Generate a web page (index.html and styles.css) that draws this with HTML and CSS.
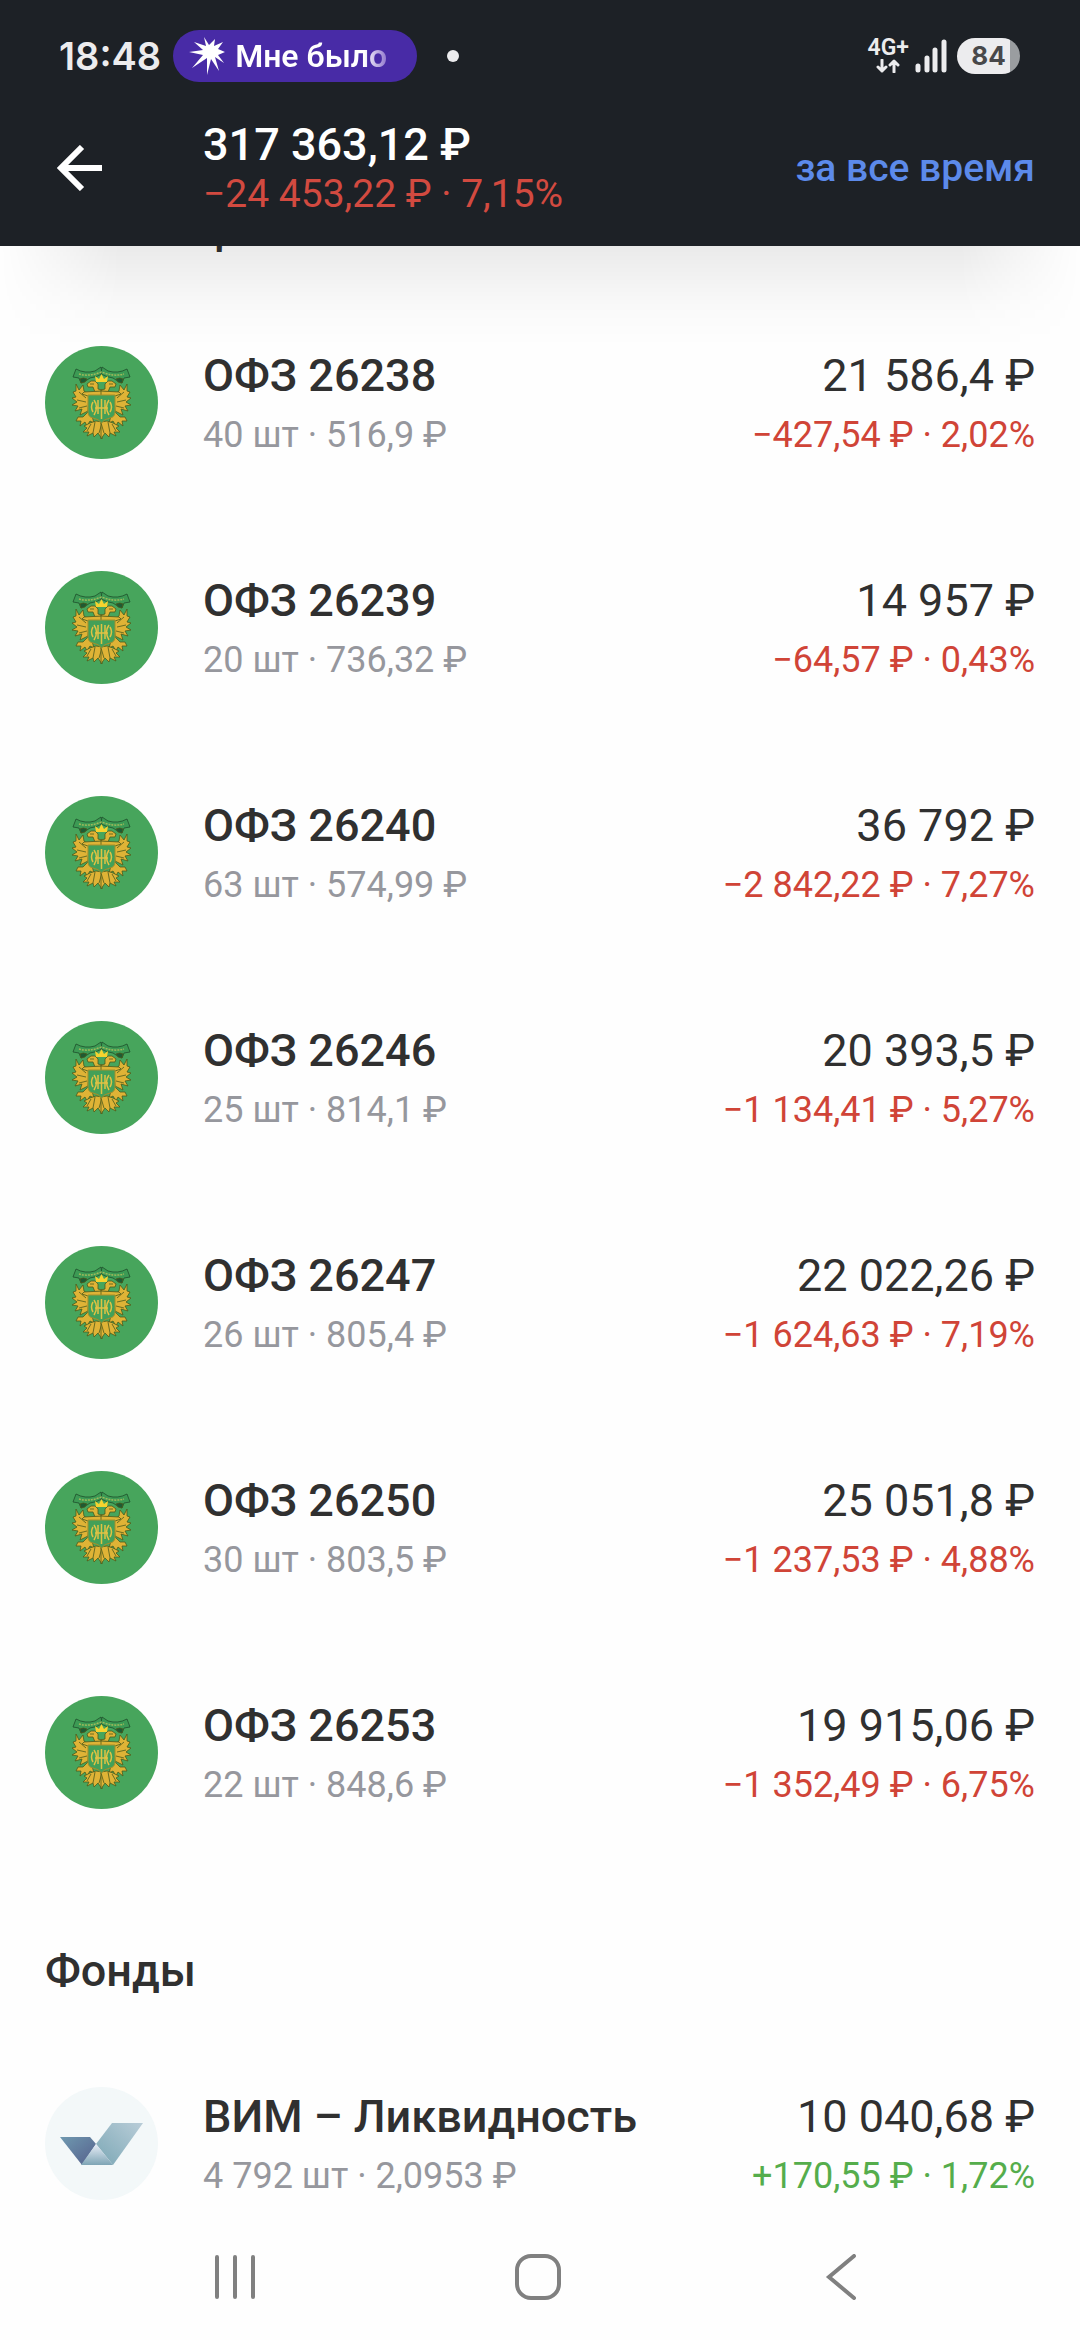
FILE: index.html
```html
<!DOCTYPE html>
<html lang="ru">
  <head>
    <meta charset="UTF-8" />
    <meta name="viewport" content="width=device-width, initial-scale=1.0" />
    <title>Портфель</title>
    <link rel="stylesheet" href="styles.css" />
  </head>

  <body>
    <!-- shared icons -->
    <svg class="sprite" aria-hidden="true">
      <symbol id="ofz" viewBox="0 0 113 113">
        <g id="ofz-half" stroke="#4d5a1c" stroke-width="0.8" fill="#dfb336">
          <path d="M56 21 L50 25 Q40 28 31 23 L28 31 L34 32 L36 37 L42 34 L45 32 Q52 31 57 28 Z" fill="#3c9a54" stroke="#1f4f2c" />
          <path d="M35 33 Q38 31 42 33 L40 36 L36 37 Z" fill="#1f5a34" />
          <path d="M44 49 L39 45 L38 39 L34 44 L31 38 L31 45 L28 46 L31 51 L27 52 L32 56 L27 59 L33 60 L30 65 L37 63 L35 69 L43 65 Z" />
          <path d="M57 45 L50 46 L48 41 L43 41 L42 38 L46 35 L50 35 L53 38 L53 43 L57 44 Z" />
          <path d="M39 46 L57 45 V50 H43 L37 48 Z" />
          <path d="M43 66 L38 71 L33 71 L31 75 L36 75 L35 80 L40 76 L42 80 L45 75 L49 77 L47 70 Z" />
          <path d="M57 76 L51 75 L45 77 L39 80 L42 82 L38 86 L44 86 L42 90 L48 87 L49 91 L53 87 L57 93 Z" />
          <path d="M57 77 L54 87 M50 76 L48 87 M46 78 L42 85 M34 46 L41 52 M32 54 L41 56 M34 62 L42 60 M45 38 L49 38" fill="none" />
        </g>
        <use href="#ofz-half" transform="translate(113 0) scale(-1 1)" />
        <path d="M51 36 L50 30 L54 33 L56.5 28 L59 33 L63 30 L62 36 Z" fill="#f5d32f" />
        <path d="M34 28 Q44 31 56.5 26 Q69 31 79 28" fill="none" stroke="#9fb95a" stroke-width="1.5" stroke-dasharray="2 1" />
        <path d="M43 49 H70 V66 Q70 71 65 72 Q59 73 56.5 77 Q54 73 48 72 Q43 71 43 66 Z" fill="#43a058" stroke="#a58f2b" stroke-width="1" />
        <path d="M49 54 Q54 61 49 69 M64 54 Q59 61 64 69 M48 56 Q45 61 48 66 M65 56 Q68 61 65 66 M56.5 53 V73 M53 54 V68 M60 54 V68 M50 62 H63" fill="none" stroke="#e0c244" stroke-width="1.5" />
      </symbol>
    </svg>

    <header class="header">
      <div class="status">
        <span class="status-time">18:48</span>
        <div class="live">
          <svg width="36" height="38" viewBox="0 0 36 38" fill="#fff">
            <path d="M15 0 L20 8 L26 2 L25 9 L34 5 L29 12 L36 15 L29 18 L35 26 L26 20 L30 34 L22 22 L18 38 L18 21 L3 31 L14 18 L0 15 L14 13 L5 5 L17 9 Z" />
          </svg>
          <span class="live-text">Мне было</span>
        </div>
        <span class="status-dot"></span>
        <div class="status-right">
          <div class="network">
            <span>4G+</span>
            <svg width="24" height="14" viewBox="0 0 24 14" fill="none" stroke="#ececee" stroke-width="3" stroke-linecap="round" stroke-linejoin="round">
              <path d="M6 1 V12 M2 8 L6 12 L10 8 M18 13 V2 M14 6 L18 2 L22 6" />
            </svg>
          </div>
          <svg width="32" height="34" viewBox="0 0 32 34" stroke="#ececee" stroke-width="5" stroke-linecap="round">
            <path d="M3 27 V31 M12 19 V31 M20 11 V31 M29 3 V31" />
          </svg>
          <span class="battery">84</span>
        </div>
      </div>

      <div class="toolbar">
        <button class="back" aria-label="Назад">
          <svg width="46" height="46" viewBox="0 0 46 46" fill="none" stroke="#fff" stroke-width="6">
            <path d="M46 23 H5 M26 2 L5 23 L26 44" />
          </svg>
        </button>
        <div class="total">
          <h1>317 363,12 ₽</h1>
          <p>−24 453,22 ₽ · 7,15%</p>
        </div>
        <button class="period">за все время</button>
      </div>
    </header>

    <main class="portfolio">
      <h2>Облигации</h2>
      <ul class="list">
        <li class="item">
          <svg class="logo"><use href="#ofz" /></svg>
          <div class="info">
            <p class="name">ОФЗ 26238</p>
            <p class="count">40 шт · 516,9 ₽</p>
          </div>
          <div class="sum">
            <p class="value">21 586,4 ₽</p>
            <p class="change down">−427,54 ₽ · 2,02%</p>
          </div>
        </li>
        <li class="item">
          <svg class="logo"><use href="#ofz" /></svg>
          <div class="info">
            <p class="name">ОФЗ 26239</p>
            <p class="count">20 шт · 736,32 ₽</p>
          </div>
          <div class="sum">
            <p class="value">14 957 ₽</p>
            <p class="change down">−64,57 ₽ · 0,43%</p>
          </div>
        </li>
        <li class="item">
          <svg class="logo"><use href="#ofz" /></svg>
          <div class="info">
            <p class="name">ОФЗ 26240</p>
            <p class="count">63 шт · 574,99 ₽</p>
          </div>
          <div class="sum">
            <p class="value">36 792 ₽</p>
            <p class="change down">−2 842,22 ₽ · 7,27%</p>
          </div>
        </li>
        <li class="item">
          <svg class="logo"><use href="#ofz" /></svg>
          <div class="info">
            <p class="name">ОФЗ 26246</p>
            <p class="count">25 шт · 814,1 ₽</p>
          </div>
          <div class="sum">
            <p class="value">20 393,5 ₽</p>
            <p class="change down">−1 134,41 ₽ · 5,27%</p>
          </div>
        </li>
        <li class="item">
          <svg class="logo"><use href="#ofz" /></svg>
          <div class="info">
            <p class="name">ОФЗ 26247</p>
            <p class="count">26 шт · 805,4 ₽</p>
          </div>
          <div class="sum">
            <p class="value">22 022,26 ₽</p>
            <p class="change down">−1 624,63 ₽ · 7,19%</p>
          </div>
        </li>
        <li class="item">
          <svg class="logo"><use href="#ofz" /></svg>
          <div class="info">
            <p class="name">ОФЗ 26250</p>
            <p class="count">30 шт · 803,5 ₽</p>
          </div>
          <div class="sum">
            <p class="value">25 051,8 ₽</p>
            <p class="change down">−1 237,53 ₽ · 4,88%</p>
          </div>
        </li>
        <li class="item">
          <svg class="logo"><use href="#ofz" /></svg>
          <div class="info">
            <p class="name">ОФЗ 26253</p>
            <p class="count">22 шт · 848,6 ₽</p>
          </div>
          <div class="sum">
            <p class="value">19 915,06 ₽</p>
            <p class="change down">−1 352,49 ₽ · 6,75%</p>
          </div>
        </li>
      </ul>

      <h2>Фонды</h2>
      <ul class="list">
        <li class="item">
          <svg class="logo logo-vim" viewBox="0 0 113 113">
            <defs>
              <linearGradient id="vim-a" x1="0" y1="0" x2="1" y2="1">
                <stop offset="0" stop-color="#6f99b0" />
                <stop offset="1" stop-color="#55608c" />
              </linearGradient>
              <linearGradient id="vim-b" x1="1" y1="0" x2="0" y2="1">
                <stop offset="0" stop-color="#b9cdd8" />
                <stop offset="1" stop-color="#7ba7b5" />
              </linearGradient>
              <linearGradient id="vim-c" x1="0" y1="0" x2="0" y2="1">
                <stop offset="0" stop-color="#e9eef8" />
                <stop offset="1" stop-color="#7ea5b5" />
              </linearGradient>
            </defs>
            <path d="M15 50 H45 L51 57 L37 78 Z" fill="url(#vim-a)" />
            <path d="M67 36 H98 L68 78 L51 57 Z" fill="url(#vim-b)" />
            <path d="M51 57 L68 78 H36 Z" fill="url(#vim-c)" />
          </svg>
          <div class="info">
            <p class="name">ВИМ – Ликвидность</p>
            <p class="count">4 792 шт · 2,0953 ₽</p>
          </div>
          <div class="sum">
            <p class="value">10 040,68 ₽</p>
            <p class="change up">+170,55 ₽ · 1,72%</p>
          </div>
        </li>
      </ul>
    </main>

    <nav class="navbar">
      <button aria-label="Недавние">
        <svg width="46" height="46" viewBox="0 0 46 46"><path d="M5 3 V43 M23 3 V43 M41 3 V43" /></svg>
      </button>
      <button aria-label="Главный экран">
        <svg width="46" height="46" viewBox="0 0 46 46"><rect x="2" y="2" width="42" height="42" rx="14" /></svg>
      </button>
      <button aria-label="Назад">
        <svg width="46" height="46" viewBox="0 0 46 46"><path d="M36 2 L11 23 L36 44" /></svg>
      </button>
    </nav>
  </body>
</html>
```

FILE: styles.css
```css
* {
  margin: 0;
  padding: 0;
  box-sizing: border-box;
}

body {
  font-family: Roboto, "Liberation Sans", sans-serif;
  color: #303030;
  background-color: #fefefe;
}

button {
  border: none;
  background: none;
  font-family: inherit;
  cursor: pointer;
}

svg {
  display: block;
  flex-shrink: 0;
}

.sprite {
  position: absolute;
  width: 0;
  height: 0;
}

/* header */
.header {
  position: fixed;
  top: 0;
  left: 0;
  right: 0;
  z-index: 1;
  color: white;
  background-color: #1d2126;
}

.header::after {
  content: "";
  position: absolute;
  top: 100%;
  left: 0;
  right: 0;
  height: 100px;
  background: linear-gradient(rgba(0, 0, 0, 0.08), rgba(0, 0, 0, 0.02) 60%, transparent);
  -webkit-mask-image: linear-gradient(to right, transparent, black 120px, black calc(100% - 120px), transparent);
  mask-image: linear-gradient(to right, transparent, black 120px, black calc(100% - 120px), transparent);
}

.status {
  display: flex;
  align-items: center;
  height: 112px;
  padding: 0 60px 0 59px;
  color: #ececee;
  font-family: Inter, Roboto, sans-serif;
}

.status-time {
  font-size: 38px;
  font-weight: 600;
}

.live {
  display: flex;
  align-items: center;
  gap: 10px;
  width: 244px;
  height: 52px;
  margin-left: 12px;
  padding-left: 16px;
  border-radius: 26px;
  background-color: #482ba6;
}

.live-text {
  font-family: Roboto, sans-serif;
  font-size: 32px;
  font-weight: 600;
  color: transparent;
  background: linear-gradient(to right, white 85%, #8f76cd);
  -webkit-background-clip: text;
  background-clip: text;
}

.status-dot {
  width: 12px;
  height: 12px;
  margin-left: 30px;
  border-radius: 50%;
  background-color: #ececee;
}

.status-right {
  display: flex;
  align-items: center;
  gap: 10px;
  margin-left: auto;
}

.network {
  display: flex;
  flex-direction: column;
  align-items: center;
  gap: 2px;
  margin-right: -4px;
  font-family: Roboto, sans-serif;
  font-size: 23px;
  line-height: 18px;
  font-weight: 600;
}

.battery {
  width: 63px;
  height: 36px;
  border-radius: 18px;
  background: linear-gradient(to right, #ececee 84%, #9a9da0 84%);
  color: #48484a;
  font-size: 26px;
  line-height: 36px;
  font-weight: 700;
  text-align: center;
}

.toolbar {
  display: flex;
  align-items: center;
  height: 134px;
  padding: 0 45px 23px 56px;
}

.back {
  width: 147px;
}

.total {
  flex: 1;
}

.total h1 {
  font-size: 45px;
  line-height: 52px;
  font-weight: 500;
}

.total p {
  font-size: 39px;
  line-height: 46px;
  color: #d24a40;
}

.period {
  color: #5c8aea;
  font-size: 39px;
  font-weight: 500;
}

/* portfolio */
.portfolio {
  padding: 203px 45px 126px;
}

.portfolio h2 {
  margin-bottom: 89px;
  font-size: 45px;
  line-height: 54px;
  font-weight: 500;
}

.list {
  display: flex;
  flex-direction: column;
  gap: 112px;
  list-style: none;
}

.list + h2 {
  margin-top: 135px;
}

.item {
  display: flex;
  align-items: center;
}

.logo {
  width: 113px;
  height: 113px;
  margin-right: 45px;
  border-radius: 50%;
  background-color: #47a55c;
}

.logo-vim {
  background-color: #f3f8f9;
}

.info {
  flex: 1;
}

.sum {
  text-align: right;
}

.name,
.value {
  margin-bottom: 10px;
  font-size: 45px;
  line-height: 54px;
}

.name {
  font-weight: 500;
}

.count,
.change {
  font-size: 36px;
  line-height: 44px;
}

.count {
  color: #96979d;
}

.down {
  color: #d04437;
}

.up {
  color: #55ad4c;
}

/* system buttons */
.navbar {
  position: fixed;
  bottom: 0;
  left: 0;
  right: 0;
  display: flex;
  justify-content: space-between;
  align-items: center;
  height: 126px;
  padding: 0 216px 0 212px;
  background-color: #fefefe;
}

.navbar svg {
  fill: none;
  stroke: #808080;
  stroke-width: 4;
  stroke-linecap: round;
}
```
